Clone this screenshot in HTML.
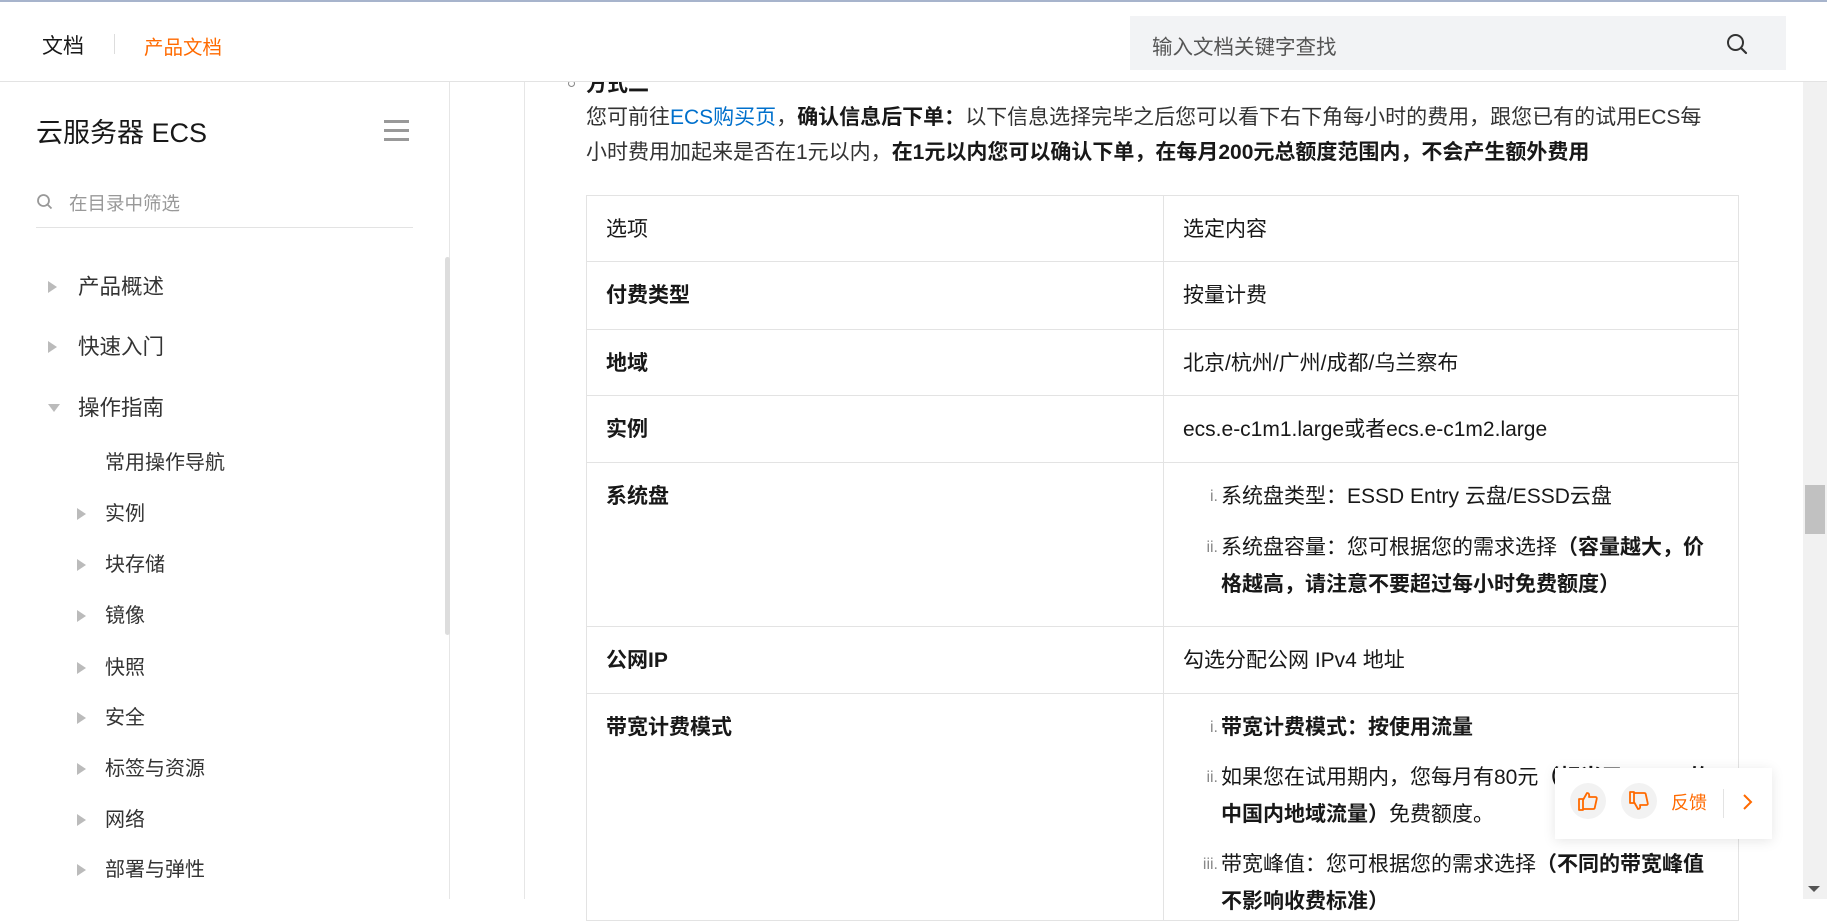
<!DOCTYPE html>
<html><head><meta charset="utf-8"><style>
*{box-sizing:border-box;margin:0;padding:0}
html,body{width:1827px;height:899px;overflow:hidden;background:#fff;font-family:"Liberation Sans","Noto Sans CJK SC",sans-serif;color:#181818}
.abs{position:absolute}
#top{left:0;top:0;width:1827px;height:82px;border-top:2px solid #a7b4cc;border-bottom:1px solid #e3e3e3;background:#fff;z-index:5}
.tri{position:absolute;width:0;height:0;border-top:6px solid transparent;border-bottom:6px solid transparent;border-left:9px solid #bbb}
.trid{position:absolute;width:0;height:0;border-left:6px solid transparent;border-right:6px solid transparent;border-top:8px solid #bbb}
.n1{position:absolute;left:78px;font-size:21.5px;color:#333;line-height:26px}
.n2{position:absolute;left:105px;font-size:20px;color:#333;line-height:26px}
table{position:absolute;left:586px;top:195px;width:1153px;border-collapse:collapse;font-size:21px}
td{border:1px solid #e3e3e3;vertical-align:top;padding:21px 18px 0 19px;line-height:26px}
td:first-child{width:577px}
ol{list-style:none;padding-left:38px}
li{position:relative;line-height:37px}
li .n{position:absolute;right:100%;margin-right:3px;color:#888;font-size:16px}
b{font-weight:bold}
</style></head><body>
<div id="top" class="abs">
  <div class="abs" style="left:42px;top:28px;font-size:21px;color:#181818">文档</div>
  <div class="abs" style="left:114px;top:32px;width:1px;height:20px;background:#ddd"></div>
  <div class="abs" style="left:144px;top:29px;font-size:19.5px;color:#ff6a00">产品文档</div>
  <div class="abs" style="left:1130px;top:14px;width:656px;height:54px;background:#f2f3f5"></div>
  <div class="abs" style="left:1152px;top:28px;font-size:20.5px;color:#555">输入文档关键字查找</div>
  <svg class="abs" style="left:1725px;top:30px" width="24" height="24" viewBox="0 0 24 24"><circle cx="10.5" cy="10.5" r="7.5" fill="none" stroke="#333" stroke-width="2"/><path d="M16 16l5 5" stroke="#333" stroke-width="2.2" stroke-linecap="round"/></svg>
</div>
<div class="abs" style="left:1803px;top:0;width:24px;height:899px;background:#f1f1f1"></div>
<div class="abs" style="left:1808px;top:12px;width:0;height:0;border-left:6px solid transparent;border-right:6px solid transparent;border-bottom:6px solid #555"></div>
<div class="abs" style="left:1808px;top:886px;width:0;height:0;border-left:6px solid transparent;border-right:6px solid transparent;border-top:6px solid #555"></div>
<div class="abs" style="left:1805px;top:485px;width:20px;height:49px;background:#c1c1c1"></div>
<div class="abs" style="left:449px;top:82px;width:1px;height:817px;background:#e6e6e6"></div>
<div class="abs" style="left:524px;top:82px;width:1px;height:817px;background:#e6e6e6"></div>
<div class="abs" style="left:445px;top:257px;width:5px;height:378px;background:#ddd;border-radius:3px"></div>
<div class="abs" style="left:36px;top:111px;font-size:27px;color:#181818">云服务器 ECS</div>
<div class="abs" style="left:384px;top:120px;width:25px;height:3px;background:#999"></div>
<div class="abs" style="left:384px;top:129px;width:25px;height:3px;background:#999"></div>
<div class="abs" style="left:384px;top:138px;width:25px;height:3px;background:#999"></div>
<svg class="abs" style="left:36px;top:193px" width="18" height="18" viewBox="0 0 18 18"><circle cx="7.5" cy="7.5" r="5.5" fill="none" stroke="#999" stroke-width="1.8"/><path d="M11.5 11.5l4 4" stroke="#999" stroke-width="1.8"/></svg>
<div class="abs" style="left:69px;top:190px;font-size:18.5px;color:#999">在目录中筛选</div>
<div class="abs" style="left:36px;top:227px;width:377px;height:1px;background:#e3e3e3"></div>

<div class="tri" style="left:48px;top:281px"></div><div class="n1" style="top:274px">产品概述</div>
<div class="tri" style="left:48px;top:341px"></div><div class="n1" style="top:334px">快速入门</div>
<div class="trid" style="left:48px;top:404px"></div><div class="n1" style="top:395px">操作指南</div>
<div class="n2" style="top:450px">常用操作导航</div>
<div class="tri" style="left:77px;top:508px"></div><div class="n2" style="top:501px">实例</div>
<div class="tri" style="left:77px;top:559px"></div><div class="n2" style="top:552px">块存储</div>
<div class="tri" style="left:77px;top:610px"></div><div class="n2" style="top:603px">镜像</div>
<div class="tri" style="left:77px;top:662px"></div><div class="n2" style="top:655px">快照</div>
<div class="tri" style="left:77px;top:712px"></div><div class="n2" style="top:705px">安全</div>
<div class="tri" style="left:77px;top:763px"></div><div class="n2" style="top:756px">标签与资源</div>
<div class="tri" style="left:77px;top:814px"></div><div class="n2" style="top:807px">网络</div>
<div class="tri" style="left:77px;top:864px"></div><div class="n2" style="top:857px">部署与弹性</div>

<div class="abs" style="left:568px;top:80px;width:7px;height:7px;border:1px solid #888;border-radius:50%"></div>
<div class="abs" style="left:586px;top:68px;font-size:21px;font-weight:bold">方式二</div>
<div class="abs" style="left:586px;top:100px;width:1155px;font-size:21px;line-height:35px;color:#333">您可前往<span style="color:#0070cc">ECS购买页</span>，<b style="color:#181818">确认信息后下单：</b>以下信息选择完毕之后您可以看下右下角每小时的费用，跟您已有的试用ECS每<br>小时费用加起来是否在1元以内，<b style="color:#181818">在1元以内您可以确认下单，在每月200元总额度范围内，不会产生额外费用</b></div>

<table>
<tr style="height:66px"><td>选项</td><td>选定内容</td></tr>
<tr style="height:68px"><td><b>付费类型</b></td><td>按量计费</td></tr>
<tr style="height:66px"><td><b>地域</b></td><td>北京/杭州/广州/成都/乌兰察布</td></tr>
<tr style="height:67px"><td><b>实例</b></td><td>ecs.e-c1m1.large或者ecs.e-c1m2.large</td></tr>
<tr style="height:164px"><td><b>系统盘</b></td><td style="padding-top:15px"><ol>
<li><span class="n">i.</span>系统盘类型：ESSD Entry 云盘/ESSD云盘</li>
<li style="margin-top:14px"><span class="n">ii.</span>系统盘容量：您可根据您的需求选择<b>（容量越大，价格越高，请注意不要超过每小时免费额度）</b></li></ol></td></tr>
<tr style="height:67px"><td><b>公网IP</b></td><td>勾选分配公网 IPv4 地址</td></tr>
<tr style="height:220px"><td><b>带宽计费模式</b></td><td style="padding-top:15px"><ol>
<li><span class="n">i.</span><b>带宽计费模式：按使用流量</b></li>
<li style="margin-top:13px"><span class="n">ii.</span>如果您在试用期内，您每月有80元<b>（相当于100GB的中国内地域流量）</b>免费额度。</li>
<li style="margin-top:13px"><span class="n">iii.</span>带宽峰值：您可根据您的需求选择<b>（不同的带宽峰值不影响收费标准）</b></li></ol></td></tr>
</table>

<div class="abs" style="left:1555px;top:768px;width:217px;height:71px;background:#fff;box-shadow:0 2px 12px rgba(0,0,0,0.1)">
  <div class="abs" style="left:15px;top:15px;width:36px;height:36px;border-radius:50%;background:#f2f2f2"></div>
  <svg class="abs" style="left:22px;top:22px" width="22" height="22" viewBox="0 0 22 22"><path d="M2 9h4v11H2zM6 10l4-7c2 0 2.5 1.5 2 4h6.5c1 0 1.5 1 1.2 2l-2 9c-.2.7-.8 1-1.5 1H6" fill="none" stroke="#ff6a00" stroke-width="1.8" stroke-linejoin="round"/></svg>
  <div class="abs" style="left:66px;top:15px;width:36px;height:36px;border-radius:50%;background:#f2f2f2"></div>
  <svg class="abs" style="left:73px;top:22px" width="22" height="22" viewBox="0 0 22 22"><path d="M2 2h4v11H2zM6 12l4 7c2 0 2.5-1.5 2-4h6.5c1 0 1.5-1 1.2-2l-2-9c-.2-.7-.8-1-1.5-1H6" fill="none" stroke="#ff6a00" stroke-width="1.8" stroke-linejoin="round"/></svg>
  <div class="abs" style="left:116px;top:21px;font-size:18px;color:#ff6a00">反馈</div>
  <div class="abs" style="left:168px;top:21px;width:1px;height:29px;background:#e3e3e3"></div>
  <svg class="abs" style="left:186px;top:24px" width="14" height="20" viewBox="0 0 14 20"><path d="M3 3l7 7-7 7" fill="none" stroke="#ff6a00" stroke-width="2"/></svg>
</div>
</body></html>
